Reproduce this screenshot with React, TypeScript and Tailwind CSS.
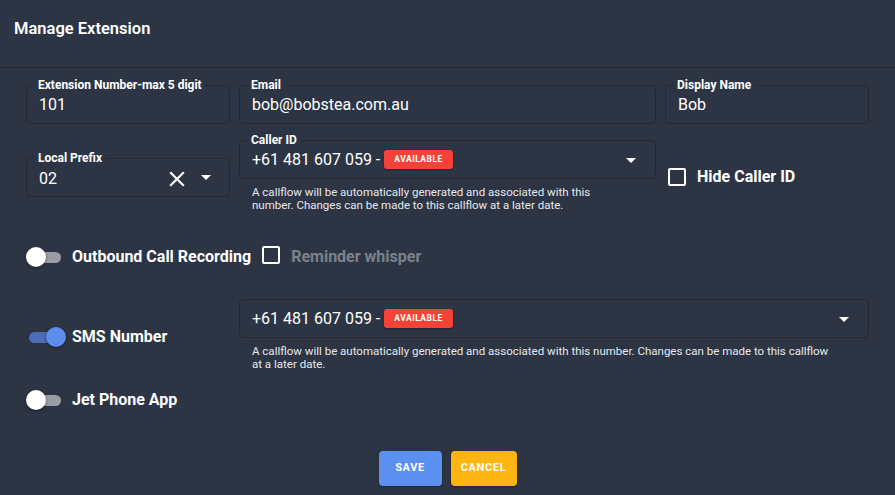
import { useState } from 'react';

const FONT = "font-['Roboto',_'Liberation_Sans',_sans-serif]";

function Caret() {
  return (
    <svg width="10" height="5" viewBox="0 0 10 5" className="shrink-0">
      <path d="M0 0 L10 0 L5 5 Z" fill="#ffffff" />
    </svg>
  );
}

function ClearX() {
  return (
    <svg width="16" height="16" viewBox="0 0 16 16" className="shrink-0">
      <path d="M2 2 L14 14 M14 2 L2 14" stroke="#ffffff" strokeWidth="2.2" strokeLinecap="square" />
    </svg>
  );
}

function Badge() {
  return (
    <span className="ml-[4px] inline-flex h-[19px] items-center rounded-[3px] bg-[#f44336] px-[10px] text-[8.5px] font-bold tracking-[0.06em] text-white shadow-[0_1px_2px_rgba(0,0,0,0.35)]">
      AVAILABLE
    </span>
  );
}

interface FieldProps {
  label?: string;
  children: React.ReactNode;
  className?: string;
}

function Field({ label, children, className = '' }: FieldProps) {
  return (
    <div className={`relative flex h-[39px] items-center rounded-[4px] border border-[#232a36] pl-[12px] pr-[18px] ${className}`}>
      {label && (
        <span className="absolute -top-[8px] left-[7px] bg-[#2d3545] px-[4px] text-[12px] leading-[14px] font-bold text-white">
          {label}
        </span>
      )}
      {children}
    </div>
  );
}

function Helper({ children }: { children: React.ReactNode }) {
  return <p className="mt-[7px] pl-[13px] text-[11.5px] leading-[12.5px] text-[#e6e8ec]">{children}</p>;
}

function Toggle({ on, onChange }: { on: boolean; onChange: () => void }) {
  return (
    <button onClick={onChange} className="relative h-[20px] w-[36px] shrink-0">
      <span className={`absolute left-[1px] right-[1px] top-[5px] h-[11px] rounded-full ${on ? 'bg-[#4a6db3]' : 'bg-[#9a9da3]'}`} />
      <span
        className={`absolute top-0 h-[20px] w-[20px] rounded-full shadow-[0_1px_3px_rgba(0,0,0,0.5)] ${on ? 'left-[18px] bg-[#5b8def]' : 'left-0 bg-white'}`}
      />
    </button>
  );
}

function Checkbox({ checked, onChange }: { checked: boolean; onChange: () => void }) {
  return (
    <button
      onClick={onChange}
      className="h-[18px] w-[18px] shrink-0 rounded-[2px] border-2 border-white"
    >
      {checked && (
        <svg viewBox="0 0 14 14" className="h-full w-full">
          <path d="M2 7 L6 11 L12 3" stroke="#fff" strokeWidth="2" fill="none" />
        </svg>
      )}
    </button>
  );
}

export default function App() {
  const [recording, setRecording] = useState(false);
  const [whisper, setWhisper] = useState(false);
  const [sms, setSms] = useState(true);
  const [jet, setJet] = useState(false);
  const [hideCaller, setHideCaller] = useState(false);

  return (
    <div className={`${FONT} h-[495px] w-[895px] overflow-hidden bg-[#2d3545] text-white`}>
      {/* Header */}
      <div className="flex h-[68px] items-center border-b border-[#232a36] px-[14px] pb-[9px]">
        <h1 className="text-[16.5px] font-semibold">Manage Extension</h1>
      </div>

      <div className="px-[26px] pt-[17px]">
        {/* Row 1 */}
        <div className="grid grid-cols-[204px_1fr_204px] gap-x-[9px]">
          <Field label="Extension Number-max 5 digit">
            <span className="text-[16px]">101</span>
          </Field>
          <Field label="Email">
            <span className="text-[16px]">bob@bobstea.com.au</span>
          </Field>
          <Field label="Display Name">
            <span className="text-[16px]">Bob</span>
          </Field>
        </div>

        {/* Row 2 */}
        <div className="mt-[16px] grid grid-cols-[204px_1fr_204px] gap-x-[9px]">
          <div className="pt-[18px]">
            <Field label="Local Prefix">
              <span className="flex-1 pt-[2px] text-[16px]">02</span>
              <span className="mr-[16px] pt-[2px]"><ClearX /></span>
              <Caret />
            </Field>
          </div>
          <div>
            <Field label="Caller ID">
              <span className="flex flex-1 items-center text-[16px]">
                +61 481 607 059 -<Badge />
              </span>
              <span className="mr-[1px] pt-[1px]"><Caret /></span>
            </Field>
            <Helper>
              A callflow will be automatically generated and associated with this
              <br />
              number. Changes can be made to this callflow at a later date.
            </Helper>
          </div>
          <div className="flex items-start gap-[11px] pl-[3px] pt-[28px]">
            <Checkbox checked={hideCaller} onChange={() => setHideCaller(!hideCaller)} />
            <span className="text-[16px] leading-[18px] font-bold">Hide Caller ID</span>
          </div>
        </div>

        {/* Row 3 */}
        <div className="mt-[34px] flex h-[24px] items-center">
          <Toggle on={recording} onChange={() => setRecording(!recording)} />
          <span className="ml-[10px] text-[16px] font-bold">Outbound Call Recording</span>
          <span className="ml-[11px]">
            <Checkbox checked={whisper} onChange={() => setWhisper(!whisper)} />
          </span>
          <span className="ml-[11px] text-[16px] font-bold text-[#7b818c]">Reminder whisper</span>
        </div>

        {/* Row 4 */}
        <div className="mt-[30px] grid grid-cols-[204px_1fr] gap-x-[9px]">
          <div className="flex items-start pt-[28px]">
            <span className="pl-[2px]"><Toggle on={sms} onChange={() => setSms(!sms)} /></span>
            <span className="ml-[8px] text-[16px] leading-[20px] font-bold">SMS Number</span>
          </div>
          <div>
            <Field>
              <span className="flex flex-1 items-center text-[16px]">
                +61 481 607 059 -<Badge />
              </span>
              <span className="mr-[1px] pt-[1px]"><Caret /></span>
            </Field>
            <Helper>
              A callflow will be automatically generated and associated with this number. Changes can be made to this callflow
              <br />
              at a later date.
            </Helper>
          </div>
        </div>

        {/* Row 5 */}
        <div className="mt-[18px] flex h-[24px] items-center">
          <Toggle on={jet} onChange={() => setJet(!jet)} />
          <span className="ml-[10px] text-[16px] font-bold">Jet Phone App</span>
        </div>

        {/* Actions */}
        <div className="mt-[39px] flex justify-center gap-[9px]">
          <button className="h-[35px] w-[63px] rounded-[4px] bg-[#5b8ff0] text-[11px] font-bold tracking-[0.06em] text-white shadow-[0_1px_3px_rgba(0,0,0,0.3)]">
            SAVE
          </button>
          <button className="h-[35px] w-[66px] rounded-[4px] bg-[#ffb511] text-[11px] font-bold tracking-[0.06em] text-white shadow-[0_1px_3px_rgba(0,0,0,0.3)]">
            CANCEL
          </button>
        </div>
      </div>
    </div>
  );
}
